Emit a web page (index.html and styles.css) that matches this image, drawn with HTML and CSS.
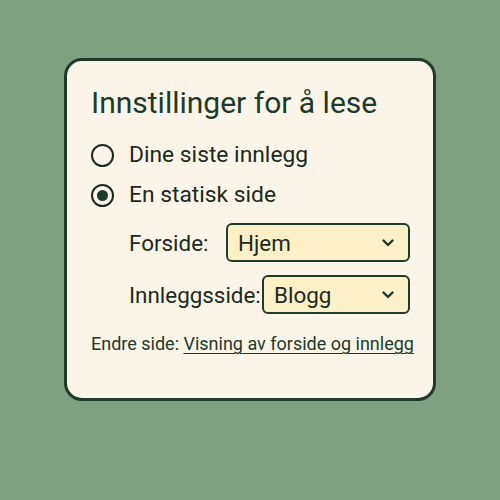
FILE: index.html
```html
<!DOCTYPE html>
<html lang="no">
<head>
<meta charset="utf-8">
<link rel="stylesheet" href="styles.css">
</head>
<body>
<main class="stage">
  <section class="card">
    <h1 class="title">Innstillinger for å lese</h1>
    <div class="options">
      <label class="radio-row">
        <span class="radio"></span>
        <span>Dine siste innlegg</span>
      </label>
      <label class="radio-row">
        <span class="radio checked"></span>
        <span>En statisk side</span>
      </label>
    </div>
    <div class="fields">
      <div class="field field-front">
        <span class="field-label">Forside:</span>
        <div class="select select-front">
          <span>Hjem</span>
          <svg class="chev" viewBox="0 0 12 8" width="12" height="8"><path d="M1.5 1.5 L6 6 L10.5 1.5" fill="none" stroke="#1d3a2c" stroke-width="2.4" stroke-linecap="round" stroke-linejoin="round"/></svg>
        </div>
      </div>
      <div class="field field-posts">
        <span class="field-label">Innleggsside:</span>
        <div class="select select-posts">
          <span>Blogg</span>
          <svg class="chev" viewBox="0 0 12 8" width="12" height="8"><path d="M1.5 1.5 L6 6 L10.5 1.5" fill="none" stroke="#1d3a2c" stroke-width="2.4" stroke-linecap="round" stroke-linejoin="round"/></svg>
        </div>
      </div>
    </div>
    <p class="footer">Endre side: <a href="#">Visning av forside og innlegg</a></p>
  </section>
</main>
</body>
</html>
```
FILE: styles.css
```css
html, body {
  margin: 0;
  padding: 0;
  background: #7e9f80;
  width: 500px;
  height: 500px;
  overflow: hidden;
}
.stage {
  padding: 58px 0 0 64px;
  font-family: Roboto, "Noto Sans", sans-serif;
  color: #1d3a2c;
}
.card {
  box-sizing: border-box;
  width: 372px;
  height: 343px;
  background: #faf5e8;
  border: 3px solid #1e3b2c;
  border-radius: 18px;
  padding: 25px 0 0 24px;
}
.title {
  margin: 0;
  font-size: 30px;
  font-weight: 400;
  line-height: 34px;
  color: #1d3a2c;
}
.options {
  margin-top: 23px;
  display: flex;
  flex-direction: column;
  gap: 16px;
}
.radio-row {
  display: flex;
  align-items: center;
  gap: 15px;
  font-size: 22.8px;
  line-height: 24px;
  color: #1d2a22;
}
.radio {
  box-sizing: border-box;
  width: 23px;
  height: 23px;
  border: 2.5px solid #1d2a22;
  border-radius: 50%;
  display: flex;
  align-items: center;
  justify-content: center;
}
.radio.checked::after {
  content: "";
  width: 11px;
  height: 11px;
  border-radius: 50%;
  background: #1e3b2c;
}
.fields {
  margin-top: 16px;
  padding-left: 38px;
  display: flex;
  flex-direction: column;
  gap: 13px;
}
.field {
  display: flex;
  align-items: center;
  font-size: 22.4px;
  color: #1d2a22;
}
.field-front .field-label { width: 97px; }
.field-posts .field-label { width: 133px; }
.select {
  box-sizing: border-box;
  height: 39px;
  background: #fbf0c6;
  border: 2.5px solid #1e3b2c;
  border-radius: 6px;
  display: flex;
  align-items: center;
  justify-content: space-between;
  padding: 0 14px 0 10px;
  font-size: 22.4px;
  color: #1d2a22;
}
.select-front { width: 184px; }
.select-posts { width: 148px; }
.chev { display: block; }
.footer {
  margin: 20px 0 0 0;
  font-size: 18px;
  line-height: 20px;
  color: #1d3a2c;
}
.footer a {
  color: #1d3a2c;
  text-decoration: underline;
  text-underline-offset: 3px;
  text-decoration-thickness: 1px;
}
```
